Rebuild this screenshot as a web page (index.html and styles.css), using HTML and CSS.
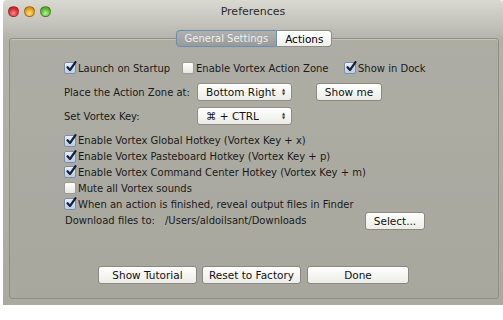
FILE: index.html
```html
<!DOCTYPE html>
<html>
<head>
<meta charset="utf-8">
<link rel="stylesheet" href="styles.css">
</head>
<body>
<div class="window">
  <div class="titlebar">
    <div class="lights">
      <span class="light red"></span>
      <span class="light yellow"></span>
      <span class="light green"></span>
    </div>
    <div class="title">Preferences</div>
  </div>
  <div class="body">
    <div class="panel">
      <div class="tabs">
        <div class="tab selected">General Settings</div>
        <div class="tab">Actions</div>
      </div>
      <div class="content">
        <div class="row row1">
          <label class="check c1"><span class="box on"><svg viewBox="0 0 12 12"><path d="M2.5 6.2 L5 9 L10.5 1.2" /></svg></span>Launch on Startup</label>
          <label class="check c2"><span class="box"></span>Enable Vortex Action Zone</label>
          <label class="check"><span class="box on"><svg viewBox="0 0 12 12"><path d="M2.5 6.2 L5 9 L10.5 1.2" /></svg></span>Show in Dock</label>
        </div>
        <div class="row row2">
          <span class="label">Place the Action Zone at:</span>
          <div class="popup"><span>Bottom Right</span><span class="arrows">▲<br>▼</span></div>
          <div class="btn showme">Show me</div>
        </div>
        <div class="row row3">
          <span class="label">Set Vortex Key:</span>
          <div class="popup"><span>⌘ + CTRL</span><span class="arrows">▲<br>▼</span></div>
        </div>
        <div class="checks">
          <label class="check"><span class="box on"><svg viewBox="0 0 12 12"><path d="M2.5 6.2 L5 9 L10.5 1.2" /></svg></span>Enable Vortex Global Hotkey (Vortex Key + x)</label>
          <label class="check"><span class="box on"><svg viewBox="0 0 12 12"><path d="M2.5 6.2 L5 9 L10.5 1.2" /></svg></span>Enable Vortex Pasteboard Hotkey (Vortex Key + p)</label>
          <label class="check"><span class="box on"><svg viewBox="0 0 12 12"><path d="M2.5 6.2 L5 9 L10.5 1.2" /></svg></span>Enable Vortex Command Center Hotkey (Vortex Key + m)</label>
          <label class="check"><span class="box"></span>Mute all Vortex sounds</label>
          <label class="check"><span class="box on"><svg viewBox="0 0 12 12"><path d="M2.5 6.2 L5 9 L10.5 1.2" /></svg></span>When an action is finished, reveal output files in Finder</label>
        </div>
        <div class="row download">
          <span class="dl-label">Download files to:</span>
          <span class="path">/Users/aldoilsant/Downloads</span>
          <div class="btn select">Select...</div>
        </div>
        <div class="spacer"></div>
        <div class="bottom">
          <div class="btn big">Show Tutorial</div>
          <div class="btn big">Reset to Factory</div>
          <div class="btn big done">Done</div>
        </div>
      </div>
    </div>
  </div>
</div>
</body>
</html>
```
FILE: styles.css
```css
* { box-sizing: border-box; }
html, body { margin: 0; padding: 0; background: #ffffff; }
body {
  width: 503px;
  height: 320px;
  font-family: "DejaVu Sans", "Liberation Sans", sans-serif;
  font-size: 10px;
  color: #1a1a1a;
}
.window {
  margin-left: 3px;
  width: 500px;
  height: 305px;
  background: linear-gradient(#d9d8d1 0px, #c6c5bd 22px, #b3b2a9 40px, #abaaa0 100%);
  display: flex;
  flex-direction: column;
  border-radius: 4px 4px 0 0;
}
.titlebar {
  height: 23px;
  display: flex;
  align-items: center;
  position: relative;
}
.lights {
  display: flex;
  gap: 5px;
  padding-left: 5px;
}
.light {
  width: 11px;
  height: 11px;
  border-radius: 50%;
  border: 1px solid rgba(90,60,40,0.45);
}
.red { background: radial-gradient(circle at 50% 70%, #ff8a8a 0, #e0303c 55%, #a5141e 100%); }
.yellow { background: radial-gradient(circle at 50% 70%, #ffe08a 0, #e8a21c 55%, #b5720a 100%); }
.green { background: radial-gradient(circle at 50% 70%, #b8f29a 0, #5cbf3a 55%, #2f8a1a 100%); }
.title {
  position: absolute;
  left: 0; right: 0; top: 5px;
  text-align: center;
  font-size: 11px;
  color: #2a2a2a;
}
.body {
  flex: 1;
  display: flex;
  flex-direction: column;
  padding: 15px 4px 6px 6px;
}
.panel {
  flex: 1;
  border: 1px solid #8f8e86;
  border-radius: 3px;
  box-shadow: inset 0 1px 0 rgba(255,255,255,0.25);
  display: flex;
  flex-direction: column;
  background: rgba(160,159,150,0.25);
}
.tabs {
  display: flex;
  justify-content: center;
  margin-top: -9px;
}
.tab {
  height: 17px;
  padding: 0 7px;
  display: flex;
  align-items: center;
  background: linear-gradient(#ffffff, #efefea);
  border: 1px solid #8e8d86;
  font-size: 10.5px;
  color: #000;
}
.tab:last-child { border-radius: 0 4px 4px 0; border-left: none; padding: 0 8px; }
.tab.selected {
  border-radius: 4px 0 0 4px;
  background: linear-gradient(#aeb1b0, #989b9a);
  border: 1.5px solid #6c8fae;
  box-shadow: 0 0 1px #7aa0c4;
  color: #eeeeea;
  font-size: 10px;
  padding: 0 8px;
}
.content {
  flex: 1;
  display: flex;
  flex-direction: column;
  padding: 14px 0 14px 54px;
}
.row { display: flex; align-items: center; }
.row1 { height: 14px; }
.c1 { width: 118px; }
.c2 { width: 162px; }
.check {
  display: flex;
  align-items: center;
  gap: 2px;
  white-space: nowrap;
}
.box {
  width: 12px;
  height: 12px;
  border-radius: 2px;
  border: 1px solid #9a9a96;
  background: linear-gradient(#ffffff, #e6e6e2);
  position: relative;
  flex: none;
}
.box.on {
  background: linear-gradient(#e6f0fb, #b8cde6);
  border-color: #7d8fa6;
}
.box svg {
  position: absolute;
  left: 0; top: -2px;
  width: 12px; height: 12px;
  fill: none;
  stroke: #16223a;
  stroke-width: 2.2;
  stroke-linecap: round;
  stroke-linejoin: round;
}
.row2 { margin-top: 8px; height: 18px; }
.row3 { margin-top: 6px; height: 18px; }
.label { width: 133px; }
.popup {
  width: 95px;
  height: 18px;
  border: 1px solid #8e8d87;
  border-radius: 3px;
  background: linear-gradient(#ffffff, #ebebe6);
  display: flex;
  align-items: center;
  justify-content: space-between;
  padding: 0 6px 0 8px;
  color: #111;
  font-size: 10.5px;
}
.arrows {
  font-size: 4px;
  line-height: 4.5px;
  color: #333;
  text-align: center;
}
.btn {
  height: 18px;
  border: 1px solid #8a8983;
  border-radius: 3px;
  background: linear-gradient(#ffffff, #ecece7);
  display: flex;
  align-items: center;
  justify-content: center;
  font-size: 10.5px;
  color: #111;
}
.showme { width: 66px; margin-left: 24px; }
.checks {
  margin-top: 8px;
  display: flex;
  flex-direction: column;
}
.checks .check { height: 15.8px; }
.download { height: 18px; margin-top: 0; }
.dl-label { width: 101px; padding-left: 1px; }
.path { width: 200px; }
.select { width: 60px; }
.spacer { flex: 1; }
.bottom {
  display: flex;
  gap: 5px;
  padding-left: 34px;
}
.big { width: 99px; }
.done { width: 102px; margin-left: 1px; }
```
